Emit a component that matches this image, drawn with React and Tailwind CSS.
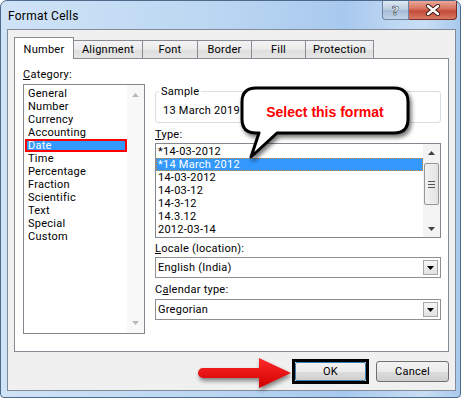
import React from "react";

const CATEGORIES = ["General", "Number", "Currency", "Accounting", "Date", "Time", "Percentage", "Fraction", "Scientific", "Text", "Special", "Custom"];
const TYPES = ["*14-03-2012", "*14 March 2012", "14-03-2012", "14-03-12", "14-3-12", "14.3.12", "2012-03-14"];
const TABS = [
  { label: "Alignment", w: "w-[69px]" },
  { label: "Font", w: "w-[55px]" },
  { label: "Border", w: "w-[54px]" },
  { label: "Fill", w: "w-[54px]" },
  { label: "Protection", w: "w-[68px]" },
];

function ArrowUp({ color = "#404040" }) {
  return (
    <svg width="7" height="4" viewBox="0 0 7 4">
      <path d="M0 4 L3.5 0 L7 4 Z" fill={color} />
    </svg>
  );
}

function ArrowDown({ color = "#404040" }) {
  return (
    <svg width="7" height="4" viewBox="0 0 7 4">
      <path d="M0 0 L7 0 L3.5 4 Z" fill={color} />
    </svg>
  );
}

function Dropdown({ value }) {
  return (
    <div className="flex h-[21px] items-center justify-between border border-[#8e8f8f] bg-white pl-[2px]">
      <span>{value}</span>
      <div className="mr-[2px] flex h-[15px] w-[15px] items-center justify-center border border-[#a7a7a7] bg-[linear-gradient(#f6f6f6,#e2e2e2)]">
        <ArrowDown color="#000" />
      </div>
    </div>
  );
}

export default function App() {
  return (
    <div className="relative h-[399px] w-[464px] overflow-hidden bg-white font-['Roboto',sans-serif] text-[11px] leading-[13px] tracking-[0.25px] text-black">
      <div className="flex h-[398px] w-[461px] flex-col rounded-t-[7px] rounded-b-[4px] border border-[#4d6a8a] bg-[linear-gradient(90deg,#cfe3f7_0%,#bcd7f2_45%,#a8c9ee_75%,#c9def5_92%,#a9c9ec_100%)]">
        {/* title bar */}
        <div className="flex h-[28px] shrink-0 items-start justify-between">
          <span className="mt-[8px] ml-[7px] text-[12px] leading-[14px]">Format Cells</span>
          <div className="mr-[3px] flex">
            <div className="flex h-[19px] w-[27px] items-center justify-center rounded-bl-[4px] border border-t-0 border-[#6d84a0] bg-[linear-gradient(#dde8f3,#b9cbe0_50%,#a5bbd5_51%,#c3d4e8)]">
              <span className="font-['DejaVu_Sans',sans-serif] text-[13px] font-bold leading-[13px] text-white [-webkit-text-stroke:0.6px_#3a4656]">?</span>
            </div>
            <div className="flex h-[19px] w-[48px] items-center justify-center rounded-br-[4px] border border-t-0 border-l-0 border-[#7a2e25] bg-[linear-gradient(#e9a898,#d5705c_45%,#c44a36_55%,#d77a63)]">
              <svg width="16" height="12" viewBox="0 0 16 12">
                <path d="M3 2 L13 10 M13 2 L3 10" stroke="#3b1a14" strokeWidth="4.2" strokeLinecap="round" />
                <path d="M3 2 L13 10 M13 2 L3 10" stroke="#fff" strokeWidth="2.4" strokeLinecap="round" />
              </svg>
            </div>
          </div>
        </div>

        {/* client area */}
        <div className="ml-[6px] flex h-[362px] w-[449px] flex-col border border-[#838b99] bg-[#f0f0f0] px-[6px] pt-[7px]">
          {/* tabs */}
          <div className="relative z-10 flex h-[21px] items-end">
            <div className="mb-[-1px] flex h-[22px] w-[60px] items-start justify-center border border-b-0 border-[#898c95] bg-white pt-[5px]">
              Number
            </div>
            {TABS.map((t) => (
              <div
                key={t.label}
                className={`flex h-[18px] ${t.w} items-center justify-center border border-b-0 border-l-0 border-[#898c95] bg-[linear-gradient(#f3f3f3,#ebebeb_50%,#dddddd_51%,#e6e6e6)]`}
              >
                {t.label}
              </div>
            ))}
          </div>

          {/* panel */}
          <div className="flex h-[294px] w-[435px] gap-[10px] border border-[#898c95] bg-white pt-[9px] pl-[8px]">
            {/* category */}
            <div className="flex w-[122px] flex-col">
              <div>
                <span className="underline">C</span>ategory:
              </div>
              <div className="mt-[3px] flex h-[250px] border border-[#828790]">
                <div className="flex-1 pt-[2px] pl-[1px]">
                  {CATEGORIES.map((c) =>
                    c === "Date" ? (
                      <div key={c} className="h-[13px] bg-[#3399ff] pl-[3px] text-white shadow-[inset_0_0_0_2px_#ff0000]">
                        {c}
                      </div>
                    ) : (
                      <div key={c} className="h-[13px] pl-[3px]">
                        {c}
                      </div>
                    )
                  )}
                </div>
                <div className="flex w-[17px] flex-col items-center justify-between bg-[#f8f8f8] py-[8px]">
                  <ArrowUp color="#b8b8b8" />
                  <ArrowDown color="#b8b8b8" />
                </div>
              </div>
            </div>

            {/* right side */}
            <div className="flex w-[286px] flex-col">
              <div className="relative mt-[23px] h-[32px] rounded-[3px] border border-[#d5dfe5] pt-[12px] pl-[7px]">
                <span className="absolute top-[-7px] left-[3px] bg-white px-[2px]">Sample</span>
                13 March 2019
              </div>

              <div className="mt-[5px]">
                <span className="underline">T</span>ype:
              </div>
              <div className="mt-[2px] flex h-[95px] border border-[#828790]">
                <div className="flex-1 pt-[1px]">
                  {TYPES.map((t, i) =>
                    i === 1 ? (
                      <div key={t} className="h-[13px] border border-dotted border-[#d98a2c] bg-[#3399ff] pl-[1px] leading-[11px] text-white">
                        {t}
                      </div>
                    ) : (
                      <div key={t} className="h-[13px] pl-[2px]">
                        {t}
                      </div>
                    )
                  )}
                </div>
                <div className="flex w-[17px] flex-col items-center bg-[#f3f3f3]">
                  <div className="flex h-[17px] items-center">
                    <ArrowUp />
                  </div>
                  <div className="mt-[2px] flex h-[42px] w-[15px] flex-col items-center justify-center gap-[2px] rounded-[2px] border border-[#979797] bg-[linear-gradient(90deg,#f2f2f2,#e3e3e3)]">
                    <div className="h-px w-[7px] bg-[#555]" />
                    <div className="h-px w-[7px] bg-[#555]" />
                    <div className="h-px w-[7px] bg-[#555]" />
                  </div>
                  <div className="flex-1" />
                  <div className="flex h-[17px] items-center">
                    <ArrowDown />
                  </div>
                </div>
              </div>

              <div className="mt-[4px]">
                <span className="underline">L</span>ocale (location):
              </div>
              <div className="mt-[2px]">
                <Dropdown value="English (India)" />
              </div>

              <div className="mt-[5px]">
                C<span className="underline">a</span>lendar type:
              </div>
              <div className="mt-[3px]">
                <Dropdown value="Gregorian" />
              </div>
            </div>
          </div>

          {/* buttons */}
          <div className="mt-[7px] flex w-[435px] items-center justify-end gap-[7px]">
            <div className="h-[25px] w-[77px] border-[3px] border-black">
              <button className="flex h-full w-full items-center justify-center rounded-[2px] border border-[#3c7fb1] bg-[linear-gradient(#f2f2f2,#ebebeb_50%,#dddddd_51%,#cfcfcf)]">
                OK
              </button>
            </div>
            <button className="flex h-[21px] w-[73px] items-center justify-center rounded-[3px] border border-[#707070] bg-[linear-gradient(#f2f2f2,#ebebeb_50%,#dddddd_51%,#cfcfcf)]">
              Cancel
            </button>
          </div>
        </div>
      </div>

      {/* callout annotation */}
      <svg className="absolute top-[84px] left-[238px] drop-shadow-[2px_3px_2px_rgba(0,0,0,0.55)]" width="176" height="80" viewBox="0 0 176 80">
        <path
          d="M18 4 H156 Q170 4 170 18 V35 Q170 49 156 49 H39 L13 73 L21 49 H18 Q4 49 4 35 V18 Q4 4 18 4 Z"
          fill="#fff"
          stroke="#000"
          strokeWidth="3"
          strokeLinejoin="round"
        />
      </svg>
      <span className="absolute top-[103px] left-[242px] w-[166px] text-center font-['Liberation_Sans',sans-serif] text-[14px] leading-[18px] font-bold tracking-normal text-[#ff0000]">
        Select this format
      </span>

      {/* arrow annotation */}
      <svg className="absolute top-[354px] left-[195px] drop-shadow-[1px_3px_2px_rgba(0,0,0,0.45)]" width="100" height="40" viewBox="0 0 100 40">
        <defs>
          <linearGradient id="rg" x1="0" y1="0" x2="0" y2="1">
            <stop offset="0" stopColor="#ff2a2a" />
            <stop offset="1" stopColor="#d00000" />
          </linearGradient>
        </defs>
        <path d="M8 14 H64 V4 L96 19 L64 34 V24 H8 A5 5 0 0 1 8 14 Z" fill="url(#rg)" />
      </svg>
    </div>
  );
}
